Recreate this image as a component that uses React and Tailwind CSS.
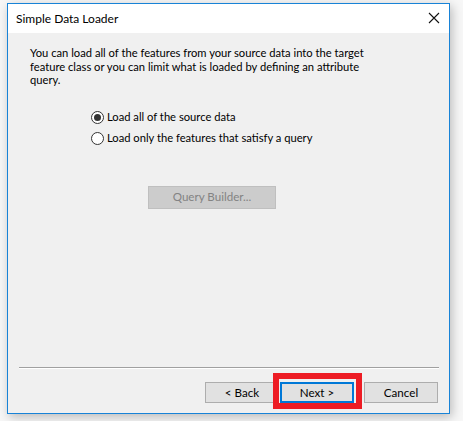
import React from "react";

const font = { fontFamily: 'Lato, "Noto Sans", sans-serif' };

function Radio({ checked, label }) {
  return (
    <label className="flex items-center h-[21px]">
      <span className="w-[13px] h-[13px] rounded-full border border-[#333333] bg-white flex items-center justify-center">
        {checked && <span className="w-[7px] h-[7px] rounded-full bg-[#333333]" />}
      </span>
      <span className="ml-[3px] text-[11.2px] text-black leading-none">{label}</span>
    </label>
  );
}

function WinButton({ children, focused, disabled, className = "" }) {
  return (
    <button
      className={
        "h-[21px] w-[74px] text-[11.6px] flex items-center justify-center leading-none " +
        (focused
          ? "border-2 border-[#0078d7] bg-[#e1e1e1] text-black "
          : disabled
          ? "border border-[#bfbfbf] bg-[#cccccc] text-[#838383] "
          : "border border-[#adadad] bg-[#e1e1e1] text-black ") +
        className
      }
    >
      {children}
    </button>
  );
}

export default function App() {
  return (
    <div className="w-[463px] h-[421px] bg-[#f7f7f7] pl-[7px] pt-[3px] overflow-hidden" style={font}>
      <div className="w-[443px] h-[411px] border border-[#1883d7] flex flex-col shadow-[2px_3px_10px_rgba(0,0,0,0.25)]">
        <div className="h-[29px] bg-white flex items-center justify-between pl-[8px] pr-[9px]">
          <span className="text-[12px] text-black">Simple Data Loader</span>
          <svg width="12" height="12" viewBox="0 0 12 12" className="mb-[1px]">
            <path d="M1 1 L11 11 M11 1 L1 11" stroke="#111" strokeWidth="1.1" fill="none" />
          </svg>
        </div>
        <div className="flex-1 bg-[#f0f0f0] flex flex-col relative">
          <div className="pl-[22px] pt-[13px] text-[11.2px] leading-[13.5px] text-black">
            <div>You can load all of the features from your source data into the target</div>
            <div>feature class or you can limit what is loaded by defining an attribute</div>
            <div>query.</div>
          </div>
          <div className="pl-[83px] mt-[20px] flex flex-col">
            <Radio checked label="Load all of the source data" />
            <Radio label="Load only the features that satisfy a query" />
          </div>
          <div className="pl-[140px] mt-[37px]">
            <WinButton disabled className="w-[128px] h-[23px]">
              Query Builder...
            </WinButton>
          </div>
          <div className="flex-1" />
          <div className="ml-[11px] w-[420px] border-t border-[#a0a0a0] border-b border-b-white" />
          <div className="flex pl-[197px] mt-[13px] mb-[10px]">
            <WinButton>&lt; Back</WinButton>
            <WinButton focused className="ml-[1px]">Next &gt;</WinButton>
            <WinButton className="ml-[10px]">Cancel</WinButton>
          </div>
          <div className="absolute left-[265px] top-[340px] w-[89px] h-[36px] border-[6px] border-[#ed1c24]" />
        </div>
      </div>
    </div>
  );
}
